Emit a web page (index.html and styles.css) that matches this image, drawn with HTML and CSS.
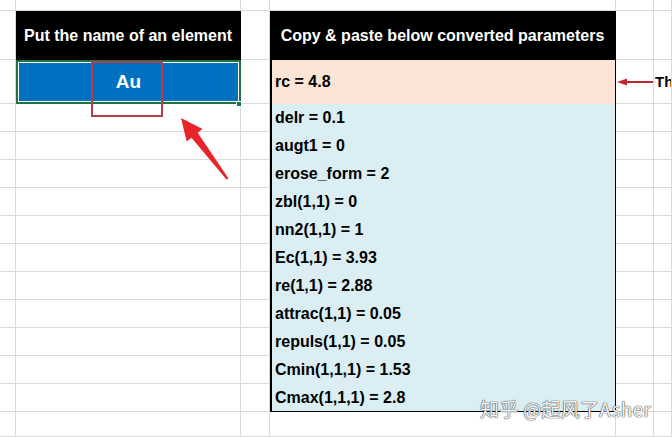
FILE: index.html
```html
<!DOCTYPE html>
<html lang="en">
  <head>
    <meta charset="UTF-8" />
    <meta name="viewport" content="width=device-width, initial-scale=1.0" />
    <title>MEAM Parameter Converter</title>
    <link rel="stylesheet" href="styles.css">
  </head>
  <body>
    <div class="sheet" id="sheet">
      <div class="cell head head-input">Put the name of an element</div>
      <div class="cell head head-output">Copy &amp; paste below converted parameters</div>

      <div class="cell element">Au</div>

      <div class="params">
        <div class="param param-rc">rc = 4.8</div>
        <div class="param">delr = 0.1</div>
        <div class="param">augt1 = 0</div>
        <div class="param">erose_form = 2</div>
        <div class="param">zbl(1,1) = 0</div>
        <div class="param">nn2(1,1) = 1</div>
        <div class="param">Ec(1,1) = 3.93</div>
        <div class="param">re(1,1) = 2.88</div>
        <div class="param">attrac(1,1) = 0.05</div>
        <div class="param">repuls(1,1) = 0.05</div>
        <div class="param">Cmin(1,1,1) = 1.53</div>
        <div class="param">Cmax(1,1,1) = 2.8</div>
      </div>

      <div class="cell note-arrow">
        <svg width="36" height="8" viewBox="0 0 36 8">
          <line x1="6" y1="4" x2="36" y2="4" stroke="#c0262d" stroke-width="2" />
          <polygon points="0,4 10,0.5 10,7.5" fill="#c0262d" />
        </svg>
      </div>
      <div class="cell note-text">Th</div>

      <!-- annotations drawn over the sheet -->
      <div class="mark-box"></div>
      <svg class="mark-arrow" width="60" height="72" viewBox="0 0 60 72">
        <polygon
          points="6,6 27.5,17 22.7,20.8 53.5,66.5 51.5,67.5 16.5,25.8 11.7,29.5"
          fill="#e8232a"
        />
      </svg>
      <div class="watermark">知乎 @起风了Asher</div>
    </div>

    <script>
      // fill the remaining grid slots with empty spreadsheet cells
      const sheet = document.getElementById("sheet");
      const EMPTY_CELLS = 73;

      for (let i = 0; i < EMPTY_CELLS; i++) {
        const cell = document.createElement("div");
        cell.className = "cell";
        sheet.appendChild(cell);
      }
    </script>
  </body>
</html>
```

FILE: styles.css
```css
html,
body {
  margin: 0;
  height: 100%;
  overflow: hidden;
  background: white;
}
body {
  font-family: "Liberation Sans", Arial, sans-serif;
  font-weight: bold;
  font-size: 16px;
  color: black;
}
.sheet {
  position: relative;
  display: grid;
  grid-template-columns: 16px 225px 29px 346px 38px 1fr;
  grid-template-rows: 11px 49px 44px repeat(11, 28px) 1fr;
  height: 437px;
}
.cell {
  box-sizing: border-box;
  border-right: 1px solid #dadada;
  border-bottom: 1px solid #dadada;
  white-space: nowrap;
  overflow: hidden;
}
.head {
  background: black;
  border-color: black;
  color: white;
  display: flex;
  align-items: center;
  justify-content: center;
  padding-top: 2px;
  grid-row: 2;
}
.head-input {
  grid-column: 2;
}
.head-output {
  grid-column: 4;
}
.element {
  grid-row: 3;
  grid-column: 2;
  position: relative;
  overflow: visible;
  background: #0070c0;
  border: 2px solid #217346;
  box-shadow: inset 0 0 0 1px #ffffff;
  color: white;
  font-size: 19px;
  display: flex;
  align-items: center;
  justify-content: center;
}
.element::after {
  content: "";
  position: absolute;
  right: -3px;
  bottom: -5px;
  width: 4px;
  height: 4px;
  background: #217346;
  border: 1px solid white;
}
.params {
  grid-row: 3 / 15;
  grid-column: 4;
  box-sizing: border-box;
  display: flex;
  flex-direction: column;
  background: #daeef3;
  border-left: 2px solid black;
  border-right: 1px solid black;
  border-bottom: 1px solid black;
}
.param {
  height: 28px;
  line-height: 28px;
  padding-left: 3px;
  white-space: nowrap;
}
.param-rc {
  height: 44px;
  line-height: 44px;
  background: #fce4d6;
}
.note-arrow {
  grid-row: 3;
  grid-column: 5;
  display: flex;
  align-items: center;
  padding-left: 1px;
}
.note-text {
  grid-row: 3;
  grid-column: 6;
  display: flex;
  align-items: center;
  padding-left: 1px;
  font-size: 15px;
}
.mark-box {
  position: absolute;
  left: 91px;
  top: 61px;
  width: 72px;
  height: 56px;
  box-sizing: border-box;
  border: 2px solid #b83c4b;
}
.mark-arrow {
  position: absolute;
  left: 175px;
  top: 112px;
}
.watermark {
  position: absolute;
  left: 480px;
  top: 399px;
  font-family: "Noto Sans CJK SC", "Noto Sans", sans-serif;
  font-weight: normal;
  font-size: 19px;
  letter-spacing: 0.3px;
  line-height: 1;
  color: rgba(255, 255, 255, 0.95);
  text-shadow: 0 0 1px #555, 0 0 1px #555, 0 0 1px #666;
  white-space: nowrap;
}
```
